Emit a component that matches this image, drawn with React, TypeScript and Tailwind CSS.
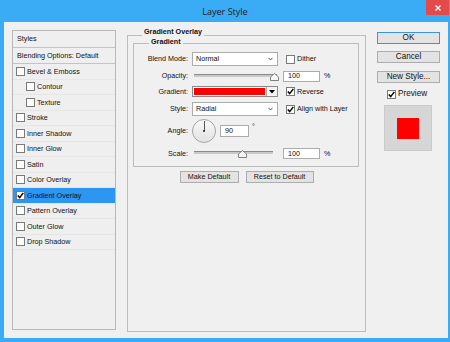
import React from 'react';

const effects: { label: string; indent?: boolean; checked?: boolean }[] = [
  { label: 'Bevel & Emboss' },
  { label: 'Contour', indent: true },
  { label: 'Texture', indent: true },
  { label: 'Stroke' },
  { label: 'Inner Shadow' },
  { label: 'Inner Glow' },
  { label: 'Satin' },
  { label: 'Color Overlay' },
  { label: 'Gradient Overlay', checked: true },
  { label: 'Pattern Overlay' },
  { label: 'Outer Glow' },
  { label: 'Drop Shadow' },
];

function Check({ checked }: { checked?: boolean }) {
  return (
    <span className="flex h-[9px] w-[9px] shrink-0 items-center justify-center border border-[#7a7a7a] bg-white">
      {checked && (
        <svg width="7" height="7" viewBox="0 0 7 7">
          <path d="M0.8 3.4 L2.7 5.6 L6.3 0.9" fill="none" stroke="#000" strokeWidth="1.5" />
        </svg>
      )}
    </span>
  );
}

function Select({ value }: { value: string }) {
  return (
    <div className="ml-[4px] flex h-[14px] w-[86px] items-center justify-between border border-[#acacac] bg-white pl-[3px] pr-[4px]">
      <span>{value}</span>
      <svg width="5" height="4" viewBox="0 0 5 4">
        <path d="M0.5 0.8 L2.5 3 L4.5 0.8" fill="none" stroke="#444" strokeWidth="0.9" />
      </svg>
    </div>
  );
}

function Slider({ widthClass, thumbClass }: { widthClass: string; thumbClass: string }) {
  return (
    <div className={`relative ml-[6px] h-[11px] ${widthClass}`}>
      <div className="absolute left-0 right-0 top-[3px] h-[3px] border-t border-[#8a8a8a] bg-[#c9c9c9]" />
      <svg className={`absolute top-[2px] ${thumbClass}`} width="9" height="8" viewBox="0 0 9 8">
        <path d="M4.5 0.5 L8.5 4 L8.5 7.5 L0.5 7.5 L0.5 4 Z" fill="#f6f6f6" stroke="#808080" />
      </svg>
    </div>
  );
}

function Field({ value, widthClass }: { value: string; widthClass: string }) {
  return (
    <div className={`flex h-[11px] items-center border border-[#acacac] bg-white pl-[4px] ${widthClass}`}>
      {value}
    </div>
  );
}

function Label({ children }: { children: React.ReactNode }) {
  return <span className="w-[54px] shrink-0 text-right">{children}</span>;
}

function Button({ children, widthClass, primary }: { children: React.ReactNode; widthClass: string; primary?: boolean }) {
  return (
    <div
      className={`flex h-[12px] items-center justify-center border bg-[#e3e3e3] ${widthClass} ${
        primary ? 'border-[#3c94e0]' : 'border-[#adadad]'
      }`}
    >
      {children}
    </div>
  );
}

function StylesPanel() {
  return (
    <div className="flex h-[300px] w-[104px] shrink-0 flex-col border border-[#b8b8b8] bg-[#efefef]">
      <div className="flex h-[17px] items-center border-b border-[#c4c4c4] pl-[4px]">Styles</div>
      <div className="flex h-[16px] items-center border-b border-[#c4c4c4] pl-[4px]">Blending Options: Default</div>
      {effects.map((e) => (
        <div
          key={e.label}
          className={`flex h-[15.5px] items-center gap-[2px] border-b border-[#e6e6e6] ${e.indent ? 'pl-[13px]' : 'pl-[3px]'} ${
            e.checked ? 'bg-[#2d96f3]' : ''
          }`}
        >
          <Check checked={e.checked} />
          <span>{e.label}</span>
        </div>
      ))}
    </div>
  );
}

function MainPanel() {
  return (
    <div className="relative ml-[11px] mt-[5px] flex h-[297px] w-[239px] shrink-0 flex-col border border-[#bcbcbc]">
      <span className="absolute -top-[8px] left-[14px] bg-[#f0f0f0] px-[2px] font-bold leading-[8px]">Gradient Overlay</span>
      <div className="relative ml-[5px] mr-[6px] mt-[7px] border border-[#bcbcbc] pb-[7px] pt-[8px]">
        <span className="absolute -top-[6px] left-[15px] bg-[#f0f0f0] px-[2px] font-bold leading-[8px]">Gradient</span>

        <div className="flex h-[14px] items-center">
          <Label>Blend Mode:</Label>
          <Select value="Normal" />
          <span className="ml-[8px]"><Check /></span>
          <span className="ml-[2px]">Dither</span>
        </div>

        <div className="mt-[4px] flex h-[12px] items-center">
          <Label>Opacity:</Label>
          <Slider widthClass="w-[83px]" thumbClass="left-[76px]" />
          <span className="ml-[6px]"><Field value="100" widthClass="w-[37px]" /></span>
          <span className="ml-[4px]">%</span>
        </div>

        <div className="mt-[4px] flex h-[11px] items-center">
          <Label>Gradient:</Label>
          <div className="ml-[4px] flex h-[11px] w-[86px] border border-[#8a8a8a] bg-white">
            <div className="m-[1px] flex-1 bg-[#ff0000]" />
            <div className="flex w-[11px] items-center justify-center border-l border-[#acacac] bg-[#f4f4f4]">
              <svg width="6" height="4" viewBox="0 0 6 4">
                <path d="M0 0 L6 0 L3 3.5 Z" fill="#000" />
              </svg>
            </div>
          </div>
          <span className="ml-[8px]"><Check checked /></span>
          <span className="ml-[2px]">Reverse</span>
        </div>

        <div className="mt-[5px] flex h-[14px] items-center">
          <Label>Style:</Label>
          <Select value="Radial" />
          <span className="ml-[8px]"><Check checked /></span>
          <span className="ml-[2px]">Align with Layer</span>
        </div>

        <div className="mt-[3px] flex h-[24px] items-center">
          <Label>Angle:</Label>
          <div className="relative ml-[4px] h-[24px] w-[24px] rounded-full border border-[#a5a5a5] bg-gradient-to-b from-[#f8f8f8] to-[#e2e2e2]">
            <div className="absolute left-[11px] top-[1px] h-[10px] w-px bg-[#555]" />
            <div className="absolute left-[10px] top-[10px] h-[2px] w-[2px] rounded-full bg-[#222]" />
          </div>
          <div className="ml-[4px] flex h-[12px] w-[29px] items-center border border-[#acacac] bg-white pl-[4px]">90</div>
          <span className="ml-[3px] self-start pt-[4px]">°</span>
        </div>

        <div className="mt-[5px] flex h-[11px] items-center">
          <Label>Scale:</Label>
          <Slider widthClass="w-[79px]" thumbClass="left-[44px]" />
          <span className="ml-[10px]"><Field value="100" widthClass="w-[37px]" /></span>
          <span className="ml-[4px]">%</span>
        </div>
      </div>

      <div className="mt-[4px] flex justify-center gap-[7px]">
        <Button widthClass="w-[59px]">Make Default</Button>
        <Button widthClass="w-[68px]">Reset to Default</Button>
      </div>
    </div>
  );
}

function SidePanel() {
  return (
    <div className="ml-[11px] mt-[2px] flex w-[63px] shrink-0 flex-col text-[8.2px]">
      <Button widthClass="w-[63px]" primary>OK</Button>
      <div className="mt-[7px]"><Button widthClass="w-[63px]">Cancel</Button></div>
      <div className="mt-[8px]"><Button widthClass="w-[63px]">New Style...</Button></div>
      <div className="ml-[10px] mt-[7px] flex h-[9px] items-center gap-[2px]">
        <Check checked />
        <span>Preview</span>
      </div>
      <div className="ml-[7px] mt-[6px] flex h-[46px] w-[48px] items-center justify-center border border-[#cbcbcb] bg-[#d6d6d6]">
        <div className="h-[21px] w-[22px] bg-[#ff0000]" />
      </div>
    </div>
  );
}

export default function App() {
  return (
    <div className="h-[342px] w-[450px] overflow-hidden bg-[#3aabf5] font-['Liberation_Sans',Arial,sans-serif] text-[7.2px] leading-none text-[#111]">
      <div className="relative flex h-[22px] items-center justify-center">
        <span className="font-['Open_Sans',sans-serif] text-[9px] text-[#1b1b1b]">Layer Style</span>
        <div className="absolute right-[1px] top-0 flex h-[15px] w-[23px] items-center justify-center bg-[#e34a4a]">
          <svg width="6" height="6" viewBox="0 0 6 6">
            <path d="M0.5 0.5 L5.5 5.5 M5.5 0.5 L0.5 5.5" stroke="#fff" strokeWidth="1.3" />
          </svg>
        </div>
      </div>
      <div className="ml-[4px] mr-[2px] flex h-[316px] items-start bg-[#f0f0f0] pl-[8px] pt-[8px]">
        <StylesPanel />
        <MainPanel />
        <SidePanel />
      </div>
    </div>
  );
}
